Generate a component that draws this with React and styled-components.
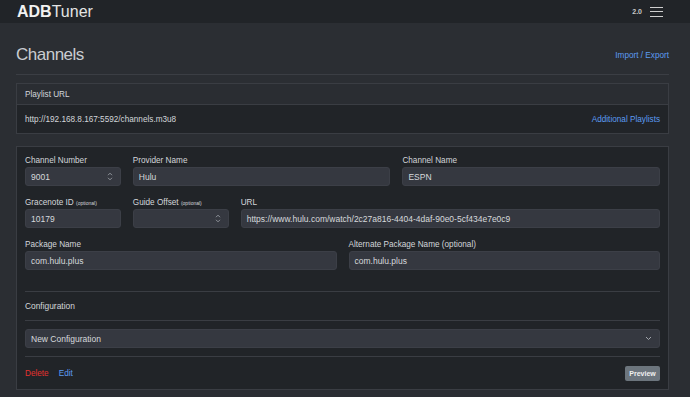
import styled, { createGlobalStyle } from 'styled-components'

const GlobalStyle = createGlobalStyle`
    * { box-sizing: border-box; }
    body {
        margin: 0;
        background: #2b2e33;
        font-family: "Liberation Sans", Arial, sans-serif;
        color: #d3d6da;
    }
`
const Navbar = styled.div`
    height: 23px;
    background: #212428;
    display: flex;
    align-items: center;
    justify-content: space-between;
    padding: 0 27px 0 17px;
`
const Logo = styled.div`
    font-size: 16px;
    color: #f2f2f2;
    b { font-weight: 700; }
    span { font-weight: 300; color: #e4e4e4; }
`
const NavRight = styled.div`
    display: flex;
    align-items: center;
    gap: 8px;
`
const Version = styled.span`
    font-size: 7px;
    font-weight: 700;
    color: #c9c9c9;
`
const Burger = styled.div`
    width: 13px;
    display: flex;
    flex-direction: column;
    gap: 3.5px;
    span {
        display: block;
        height: 1px;
        background: #cfcfcf;
    }
`
const Main = styled.div`
    padding: 0 21px 0 16px;
`
const TitleRow = styled.div`
    display: flex;
    justify-content: space-between;
    align-items: center;
    padding: 21px 0 8px;
    border-bottom: 1px solid #3b3e44;
    margin-bottom: 8px;
`
const Title = styled.h1`
    margin: 0;
    font-size: 17px;
    line-height: 22px;
    font-weight: 500;
    letter-spacing: -0.5px;
    color: #c9ccd1;
`
const Link = styled.a`
    font-size: 8.2px;
    color: ${p => p.$danger ? '#e5322f' : '#5c9cf2'};
    text-decoration: none;
    cursor: pointer;
`
const Card = styled.div`
    background: #212428;
    border: 1px solid #3a3d43;
    margin-bottom: ${p => p.$mb || 0}px;
`
const CardHeader = styled.div`
    background: #2a2d32;
    border-bottom: 1px solid #3a3d43;
    height: 21px;
    display: flex;
    align-items: center;
    padding: 0 8px;
    font-size: 8.2px;
`
const CardBody = styled.div`
    padding: ${p => p.$pad || '0 8px'};
    height: ${p => p.$h ? p.$h + 'px' : 'auto'};
    display: ${p => p.$flex ? 'flex' : 'block'};
    align-items: center;
    justify-content: space-between;
    font-size: 8.2px;
`
const Grid = styled.div`
    display: grid;
    grid-template-columns: repeat(12, 1fr);
    column-gap: 12px;
    row-gap: 12px;
`
const Field = styled.div`
    grid-column: span ${p => p.$span};
    display: flex;
    flex-direction: column;
    gap: 2px;
`
const Label = styled.label`
    font-size: 8.2px;
    line-height: 9px;
    height: 9px;
    color: #d3d6da;
    small { font-size: 5px; }
`
const Input = styled.div`
    height: 19px;
    border-radius: 3px;
    background: #353840;
    border: 1px solid #3c3f47;
    display: flex;
    align-items: center;
    justify-content: space-between;
    padding: 0 7px 0 5px;
    font-size: 8.5px;
    color: #d6d8dc;
    white-space: nowrap;
    overflow: hidden;
`
const Rule = styled.div`
    border-top: 1px solid #3a3d43;
`
const Spacer = styled.div`
    height: ${p => p.$h}px;
`
const SectionTitle = styled.div`
    font-size: 8.4px;
    height: 28px;
    display: flex;
    align-items: center;
`
const Footer = styled.div`
    display: flex;
    align-items: center;
    justify-content: space-between;
    height: 32px;
`
const Actions = styled.div`
    display: flex;
    gap: 10px;
`
const Button = styled.button`
    font-family: inherit;
    font-size: 7px;
    font-weight: 700;
    color: #f0f0f0;
    background: #6c757d;
    border: none;
    border-radius: 2px;
    width: 35px;
    height: 15px;
    padding: 0;
`

const Spinner = () => (
    <svg width="6" height="9" viewBox="0 0 6 9" fill="none" stroke="#9a9ea5" strokeWidth="0.9">
        <path d="M1 3.2 L3 1.2 L5 3.2" />
        <path d="M1 5.8 L3 7.8 L5 5.8" />
    </svg>
)
const Chevron = () => (
    <svg width="7" height="5" viewBox="0 0 7 5" fill="none" stroke="#a0a4ab" strokeWidth="1">
        <path d="M1 1 L3.5 3.5 L6 1" />
    </svg>
)

const App = () => {
    return (
        <>
            <GlobalStyle />
            <Navbar>
                <Logo><b>ADB</b><span>Tuner</span></Logo>
                <NavRight>
                    <Version>2.0</Version>
                    <Burger><span /><span /><span /></Burger>
                </NavRight>
            </Navbar>
            <Main>
                <TitleRow>
                    <Title>Channels</Title>
                    <Link>Import / Export</Link>
                </TitleRow>
                <Card $mb={12}>
                    <CardHeader>Playlist URL</CardHeader>
                    <CardBody $flex $h={28}>
                        <span>http://192.168.8.167:5592/channels.m3u8</span>
                        <Link>Additional Playlists</Link>
                    </CardBody>
                </Card>
                <Card>
                    <CardBody $pad="9px 8px 0">
                        <Grid>
                            <Field $span={2}>
                                <Label>Channel Number</Label>
                                <Input>9001<Spinner /></Input>
                            </Field>
                            <Field $span={5}>
                                <Label>Provider Name</Label>
                                <Input>Hulu</Input>
                            </Field>
                            <Field $span={5}>
                                <Label>Channel Name</Label>
                                <Input>ESPN</Input>
                            </Field>
                            <Field $span={2}>
                                <Label>Gracenote ID <small>(optional)</small></Label>
                                <Input>10179</Input>
                            </Field>
                            <Field $span={2}>
                                <Label>Guide Offset <small>(optional)</small></Label>
                                <Input><span /><Spinner /></Input>
                            </Field>
                            <Field $span={8}>
                                <Label>URL</Label>
                                <Input>https://www.hulu.com/watch/2c27a816-4404-4daf-90e0-5cf434e7e0c9</Input>
                            </Field>
                            <Field $span={6}>
                                <Label>Package Name</Label>
                                <Input>com.hulu.plus</Input>
                            </Field>
                            <Field $span={6}>
                                <Label>Alternate Package Name (optional)</Label>
                                <Input>com.hulu.plus</Input>
                            </Field>
                        </Grid>
                        <Spacer $h={21} />
                        <Rule />
                        <SectionTitle>Configuration</SectionTitle>
                        <Rule />
                        <Spacer $h={8} />
                        <Input>New Configuration<Chevron /></Input>
                        <Spacer $h={8} />
                        <Rule />
                        <Footer>
                            <Actions>
                                <Link $danger>Delete</Link>
                                <Link>Edit</Link>
                            </Actions>
                            <Button>Preview</Button>
                        </Footer>
                    </CardBody>
                </Card>
            </Main>
        </>
    )
}

export default App
